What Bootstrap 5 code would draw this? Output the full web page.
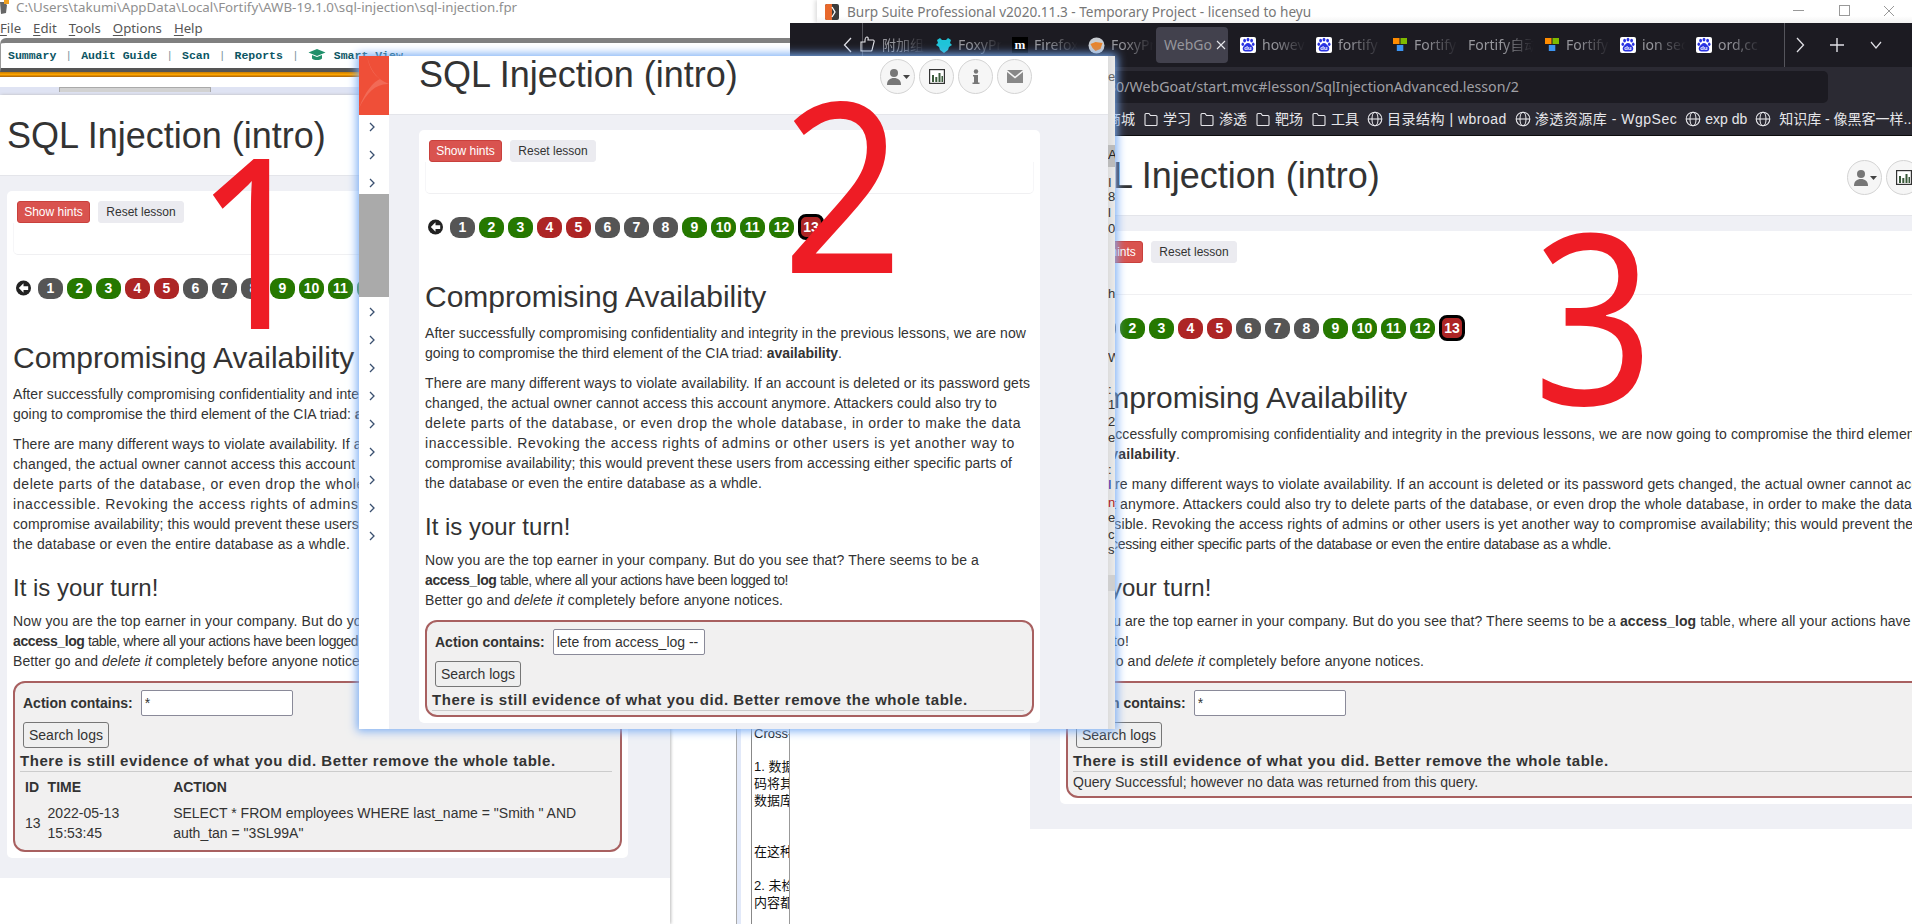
<!DOCTYPE html>
<html lang="en">
<head>
    <meta charset="UTF-8">
    <meta name="viewport" content="width=device-width, initial-scale=1.0">
    <title>SQL Injection (intro)</title>
    <link href="https://cdn.jsdelivr.net/npm/bootstrap@5.3.0/dist/css/bootstrap.min.css" rel="stylesheet">
    <style>
        html, body { height: 100%; }
        body { background: #fff; overflow: hidden; font: 14px/20px "Liberation Sans", Arial, sans-serif; color: #333; }
        .desk { position: relative; width: 1912px; height: 924px; overflow: hidden; }
        .win { position: absolute; overflow: hidden; background: #fff; }

        /* fortify window */
        .fortify { left: 0; top: 0; width: 790px; height: 96px; }
        .fy-title { height: 18px; padding-left: 16px; font: 13.3px/15px "Noto Sans", sans-serif; color: #8f8f8f; white-space: nowrap; position: relative; }
        .fy-icon { position: absolute; left: 0; top: 0; }
        .fy-menu { height: 20px; font: 13.2px/20px "Noto Sans", sans-serif; color: #555; gap: 12px; }
        .fy-menu u { text-underline-offset: 2px; }
        .fy-bar { height: 34px; background: #fff; border-top: 5px solid #808080; border-bottom: 4px solid #555; border-left: 1px solid #999; border-radius: 6px 0 0 0; padding-left: 7px; font: bold 11.5px/25px "Liberation Mono", monospace; color: #0b5563; white-space: nowrap; }
        .fy-bar i { font-style: normal; color: #7d95a0; font-weight: normal; margin: 0 9px; }
        .fy-orange { height: 5px; background: linear-gradient(#c77a00, #fca400 50%, #a8620a); }
        .fy-tabs { height: 15px; background: #dfe3f3; padding-left: 59px; }
        .fy-tab { width: 152px; height: 5px; margin-top: 10px; background: #d2d2d2; border: 1px solid #aaa; border-bottom: 0; }
        .fy-black { height: 3px; background: #111; }

        /* webgoat lesson */
        .lesson-head { background: #fff; border-bottom: 1px solid #e4e5ea; display: flex; align-items: flex-end; justify-content: space-between; white-space: nowrap; }
        .lesson-title { font: 500 36px/40px "Liberation Sans", sans-serif; margin: 0 0 19px; color: #333; }
        .lesson-tools { margin-bottom: 20px; gap: 4px; flex: none; }
        .tool-btn { width: 35px; height: 35px; border-radius: 50%; background: #f6f6f6; border: 1px solid #d4d4d4; padding: 0; display: flex; align-items: center; justify-content: center; }
        .lesson-body { background: #eff0f5; padding: 15px 0 20px; }
        .lesson-card { background: #fff; border-radius: 5px; padding: 10px 6px 6px; width: 621px; }
        .lesson-card p { margin: 0 0 10px; }
        .fit-line { display: block; width: max-content; white-space: nowrap; }
        .act-row { gap: 8px; padding-left: 4px; }
        .act-btn { font-size: 12px; line-height: 16px; padding: 2px 0; border-radius: 3px; }
        .act-hint { background: #d9534f; border: 1px solid #c9403c; color: #fff; width: 73px; }
        .act-reset { background: #ebebf0; border: 1px solid #ebebf0; color: #333; width: 86px; }
        .hint-panel { height: 32px; border-bottom: 1px solid #f0f0f2; border-left: 1px solid #f6f6f8; border-right: 1px solid #f6f6f8; border-radius: 0 0 5px 5px; }
        .pager-row { margin: 23px 0 0 3px; gap: 4px; align-items: center; height: 20px; }
        .pg-back { width: 15px; height: 16px; margin-right: 3px; flex: none; }
        .pg-step { width: 25px; height: 21px; border-radius: 9px; color: #fff; font-weight: bold; font-size: 14px; line-height: 21px; text-align: center; flex: none; }
        .pg-gray { background: #555; }
        .pg-green { background: #267800; }
        .pg-red { background: #ad2525; }
        .pg-now { outline: 3px solid #000; outline-offset: -2px; height: 24px; line-height: 24px; width: 24px; border-radius: 7px; margin-left: 1px; }
        .lesson-card h2 { font: 500 30px/33px "Liberation Sans", sans-serif; margin: 43px 0 10px; color: #333; }
        .lesson-card h3 { font: 500 24px/26px "Liberation Sans", sans-serif; margin: 21px 0 10px; color: #333; }
        .log-box { border: 2px solid #a86060; border-radius: 12px; background: #f1f0f0; padding: 7px 5px 4px; margin-top: 10px; }
        .log-form { padding-left: 3px; }
        .log-label { font-weight: bold; }
        .log-input { width: 152px; height: 26px; border: 1px solid #8a8a99; border-radius: 2px; padding: 0 3px; font: 14px "Liberation Sans", sans-serif; color: #333; background: #fff; margin-left: 8px; }
        .log-search { display: block; height: 26px; margin-top: 6px; padding: 0 5px; font-size: 14px; line-height: 24px; background: #efefef; border: 1px solid #767676; border-radius: 3px; color: #333; }
        .log-feedback { font-weight: bold; font-size: 15px; letter-spacing: .56px; line-height: 20px; margin-top: 3px; white-space: nowrap; }
        .log-rule { height: 1px; background: #ccc; margin-right: 3px; }
        .log-table { --bs-table-bg: transparent; --bs-table-color: #333; margin: 0; border-collapse: separate; width: auto; }
        .log-table th, .log-table td { border: 0; padding: 3px 2px; vertical-align: middle; }
        .log-table th:first-child, .log-table td:first-child { padding-left: 3px; padding-right: 3px; }
        .log-table td { padding-top: 1px; padding-bottom: 1px; }
        .log-table td.cell-time { width: 125px; }
        .log-table td.cell-act { width: 450px; }

        /* second window */
        .win-two { left: 359px; top: 56px; width: 756px; height: 673px; display: flex; box-shadow: 0 0 9px 2px #79adf5; z-index: 5; }
        .win-two .lesson-card { margin-left: 30px; }
        .win-two .lesson-head { height: 59px; padding: 0 76px 0 30px; }
        .win-two .lesson-main { width: 719px; flex: none; }
        .wg-side { width: 30px; flex: none; background: #fff; }
        .wg-logo { display: block; }
        .wg-menu { margin-top: -2px; padding-right: 4px; }
        .wg-chev { height: 28px; display: flex; align-items: center; justify-content: center; }
        .wg-thumb { height: 103px; background: #aaa; margin: -3px -4px 1px 0; }
        .edge-strip { width: 7px; flex: none; background: linear-gradient(90deg, #dcdcdc, #eaeaea); position: relative; font: 13px/16px "Liberation Sans", sans-serif; color: #333; overflow: hidden; }
        .edge-glyph { position: absolute; left: 0; }
        .edge-thumb { position: absolute; left: 0; width: 7px; background: #bbb; }

        /* chinese notes behind */
        .notes { left: 736px; top: 600px; width: 54px; height: 324px; background: #fff; border-left: 1px solid #aaa; border-right: 1px solid #999; z-index: 1; font: 13px/17px "Liberation Sans", "Noto Sans CJK SC", sans-serif; color: #111; white-space: nowrap; }
        .notes-band { position: absolute; left: 0; top: 0; bottom: 0; width: 4px; background: #e2e9f9; }
        .notes-rule { position: absolute; left: 14px; top: 0; bottom: 0; width: 1px; background: #888; }
        .note-line { position: absolute; left: 17px; }

        /* burp + firefox */
        .burp-bar { left: 817px; top: 0; width: 1095px; height: 23px; z-index: 2; box-shadow: -2px 0 4px #ddd; padding-left: 8px; background: linear-gradient(#fff 70%, #f2f2f2); }
        .burp-name { font: 13.6px/22px "Noto Sans", sans-serif; color: #777; white-space: nowrap; }
        .ctl { position: absolute; top: 5px; }
        .fx { left: 790px; top: 23px; width: 1122px; height: 113px; background: #2b2a33; z-index: 3; }
        .fx-tabs { height: 44px; background: #1c1b22; padding-left: 66px; position: relative; }
        .fx-tab { width: 76px; height: 36px; margin-top: 4px; flex: none; display: flex; align-items: center; gap: 6px; padding-left: 4px; overflow: hidden; white-space: nowrap; font: 14px/36px "Noto Sans", "Noto Sans CJK SC", sans-serif; color: #96969c; border-radius: 4px; -webkit-mask-image: linear-gradient(90deg, #000 50%, transparent 92%); mask-image: linear-gradient(90deg, #000 50%, transparent 92%); }
        .fx-tab svg { flex: none; }
        .fx-active { background: #42414d; -webkit-mask-image: none; mask-image: none; padding-left: 8px; width: 72px; margin: 4px 8px 0 -4px; gap: 4px; }
        .fx-rule { position: absolute; top: 0; width: 1px; height: 44px; background: #55555c; }
        .fx-glyph { position: absolute; color: #e0e0e6; }
        .fx-url { height: 32px; margin: 4px 84px 0 250px; background: #1c1b22; border-radius: 5px; padding-left: 68px; font: 14.2px/32px "Noto Sans", sans-serif; color: #a0a0a6; white-space: nowrap; overflow: hidden; }
        .fx-marks { height: 33px; padding-left: 317px; gap: 8px; font: 14px/33px "Liberation Sans", "Noto Sans CJK SC", sans-serif; color: #e6e6ea; white-space: nowrap; border-bottom: 1px solid #0c0c0d; align-items: center; }
        .fx-mark { gap: 4px; align-items: center; }
        .fx-wide { letter-spacing: .5px; }
        .fx-page { left: 790px; top: 136px; width: 240px; height: 788px; background: #fff; z-index: 1; }

        /* third window */
        .win-three { left: 1030px; top: 136px; width: 882px; height: 788px; z-index: 1; }
        .win-three .lesson-head { height: 80px; padding-left: 31px; width: 1100px; }
        .win-three .lesson-tools { margin-right: 131px; }
        .win-three .lesson-body { width: 1080px; padding-bottom: 25px; }
        .win-three .lesson-card { width: 1020px; margin-left: 30px; }

        /* first window */
        .win-one { left: 0; top: 95px; width: 670px; height: 829px; box-shadow: 1px 0 3px #bbb; z-index: 0; }
        .win-one .lesson-head { height: 81px; padding-left: 7px; }
        .win-one .lesson-tools { display: none !important; }
        .win-one .lesson-card { margin-left: 7px; }

        /* hand written numbers */
        .big-num { position: absolute; z-index: 9; font: 238px/238px "Noto Sans", sans-serif; color: #ee1c25; transform: scaleX(.89); transform-origin: left top; }
    </style>
</head>
<body>
<svg width="0" height="0" class="position-absolute">
    <symbol id="baidu" viewBox="0 0 16 16">
        <rect width="16" height="16" rx="2" fill="#fff"/>
        <g fill="#2932e1"><ellipse cx="4.6" cy="3.6" rx="1.4" ry="1.9"/><ellipse cx="8" cy="2.6" rx="1.4" ry="1.9"/><ellipse cx="11.6" cy="3.6" rx="1.4" ry="1.9"/><ellipse cx="2.8" cy="7.2" rx="1.3" ry="1.7"/><ellipse cx="13.2" cy="7.2" rx="1.3" ry="1.7"/><path d="M8 6c-2 0-3 2-4.500 3.500C2 11 2.600 14.500 5.500 14.500h5c2.900 0 3.500-3.500 2-5C11 8 10 6 8 6z"/></g>
        <text x="8" y="13" font-size="6" font-weight="bold" text-anchor="middle" fill="#fff" font-family="Liberation Sans">du</text>
    </symbol>
    <symbol id="ms4" viewBox="0 0 16 16">
        <rect x="1" y="1" width="6.500" height="6" fill="#ff8c00"/><rect x="8.500" y="1" width="6.500" height="6" fill="#7fba00"/><rect x="4.800" y="8" width="6.500" height="6" fill="#3b93f0"/>
    </symbol>
    <symbol id="globe" viewBox="0 0 16 16">
        <g fill="none" stroke="#e6e6ea" stroke-width="1.100"><circle cx="8" cy="8" r="6.800"/><ellipse cx="8" cy="8" rx="3" ry="6.800"/><path d="M1.200 8h13.600"/></g>
    </symbol>
    <symbol id="folder" viewBox="0 0 16 16">
        <path d="M2 13.500V3.500c0-.6.400-1 1-1h3l1.500 2h5.500c.6 0 1 .4 1 1v8c0 .6-.4 1-1 1H3c-.6 0-1-.4-1-1z" fill="none" stroke="#e6e6ea" stroke-width="1.100"/>
    </symbol>
    <symbol id="chev" viewBox="0 0 8 10">
        <path d="M2 1l4 4-4 4" fill="none" stroke="#3a5070" stroke-width="1.300"/>
    </symbol>
</svg>

<div class="desk">
    <!-- fortify behind everything -->
    <div class="win fortify">
        <div class="fy-title"><svg class="fy-icon" width="11" height="14" viewBox="0 0 11 14"><path d="M0 2l4 0 3 3-1 8-5 1z" fill="#666"/><rect x="4" y="0" width="5" height="4" fill="#f0a020"/></svg>C:\Users\takumi\AppData\Local\Fortify\AWB-19.1.0\sql-injection\sql-injection.fpr</div>
        <div class="fy-menu d-flex"><span><u>F</u>ile</span><span><u>E</u>dit</span><span><u>T</u>ools</span><span><u>O</u>ptions</span><span><u>H</u>elp</span></div>
        <div class="fy-bar">Summary<i>|</i>Audit Guide<i>|</i>Scan<i>|</i>Reports<i>|</i><svg width="18" height="14" viewBox="0 0 18 14" class="me-2 align-text-bottom"><path d="M9 1L0.500 4.500 9 8l8.500-3.500z" fill="#1f8f6a"/><path d="M4 7v3.500c2 2 8 2 10 0V7l-5 2z" fill="#1f8f6a"/></svg>Smart View</div>
        <div class="fy-orange"></div>
        <div class="fy-tabs"><div class="fy-tab"></div></div>
        <div class="fy-black"></div>
    </div>

    <div class="win win-one" id="winOne"></div>

    <div class="win notes">
        <div class="notes-band"></div><div class="notes-rule"></div>
        <div class="note-line" style="top:125px">Cross-Site</div>
        <div class="note-line" style="top:158px">1. 数据进入</div>
        <div class="note-line" style="top:175px">码将其写入</div>
        <div class="note-line" style="top:192px">数据库或其</div>
        <div class="note-line" style="top:243px">在这种情况</div>
        <div class="note-line" style="top:277px">2. 未检验包</div>
        <div class="note-line" style="top:294px">内容都可以</div>
    </div>

    <!-- burp title + browser chrome -->
    <div class="win burp-bar">
        <div class="d-flex align-items-center gap-1 h-100">
            <svg width="14" height="16" viewBox="0 0 14 16"><rect width="14" height="16" rx="2" fill="#3c3c3c"/><path d="M0 2a2 2 0 012-2h5v16H2a2 2 0 01-2-2z" fill="#e8692c"/><path d="M7 3l3 5-3 5" fill="none" stroke="#fff" stroke-width="1.300"/></svg>
            <span class="burp-name ms-1">Burp Suite Professional v2020.11.3 - Temporary Project - licensed to heyu</span>
        </div>
        <svg class="ctl" style="left:976px" width="11" height="11"><path d="M0 5.500h11" stroke="#999"/></svg>
        <svg class="ctl" style="left:1022px" width="11" height="11"><rect x=".5" y=".5" width="10" height="10" fill="none" stroke="#999"/></svg>
        <svg class="ctl" style="left:1066px" width="12" height="12"><path d="M1 1l10 10M11 1L1 11" stroke="#999"/></svg>
    </div>

    <div class="win fx">
        <div class="fx-tabs d-flex">
            <svg class="fx-glyph" style="left:53px;top:14px" width="9" height="16"><path d="M8 1L1.500 8 8 15" fill="none" stroke="#e0e0e6" stroke-width="1.300"/></svg>
            <div class="fx-rule" style="left:72px"></div>
            <div class="fx-tab"><svg width="16" height="18" viewBox="0 0 16 18"><path d="M1 6h4V4c0-1.500 1-3 2-3s1.500 1 1 3h5c1 0 1.500 1 1 2l-2 8c0 .6-.6 1-1 1H1z" fill="none" stroke="#e6e6ea" stroke-width="1.100"/></svg>附加组件</div>
            <div class="fx-tab"><svg width="16" height="16" viewBox="0 0 16 16"><path d="M1 3l3-2 2 2h4l2-2 3 2-1 3 2 2-3 2-1 3-4 3-4-3-1-3-3-2 2-2z" fill="#1fc4d8"/></svg>FoxyProxy</div>
            <div class="fx-tab"><svg width="16" height="16" viewBox="0 0 16 16"><rect width="16" height="16" fill="#000"/><text x="8" y="12" font-size="13" font-weight="bold" text-anchor="middle" fill="#fff" font-family="Liberation Serif">m</text></svg>Firefox</div>
            <div class="fx-tab"><svg width="17" height="17" viewBox="0 0 17 17"><circle cx="8.500" cy="8.500" r="8" fill="#c9cdd2"/><path d="M2.500 7l5-2 7 1-2 6-5 2-3-3z" fill="#e8842c"/></svg>FoxyProxy</div>
            <div class="fx-tab fx-active">WebGo<svg width="10" height="10" viewBox="0 0 10 10"><path d="M1 1l8 8M9 1L1 9" stroke="#e6e6ea" stroke-width="1.100"/></svg></div>
            <div class="fx-tab"><svg width="16" height="16"><use href="#baidu"/></svg>however</div>
            <div class="fx-tab"><svg width="16" height="16"><use href="#baidu"/></svg>fortify</div>
            <div class="fx-tab"><svg width="16" height="16"><use href="#ms4"/></svg>Fortify</div>
            <div class="fx-tab">Fortify自动</div>
            <div class="fx-tab"><svg width="16" height="16"><use href="#ms4"/></svg>Fortify</div>
            <div class="fx-tab"><svg width="16" height="16"><use href="#baidu"/></svg>ion sec</div>
            <div class="fx-tab"><svg width="16" height="16"><use href="#baidu"/></svg>ord,cc</div>
            <div class="fx-rule" style="left:994px"></div>
            <svg class="fx-glyph" style="left:1006px;top:14px" width="9" height="16"><path d="M1 1l6.500 7L1 15" fill="none" stroke="#e0e0e6" stroke-width="1.300"/></svg>
            <svg class="fx-glyph" style="left:1040px;top:15px" width="14" height="14"><path d="M7 0v14M0 7h14" stroke="#e0e0e6" stroke-width="1.400"/></svg>
            <svg class="fx-glyph" style="left:1080px;top:18px" width="12" height="8"><path d="M1 1l5 6 5-6" fill="none" stroke="#e0e0e6" stroke-width="1.200"/></svg>
        </div>
        <div class="fx-url">80/WebGoat/start.mvc#lesson/SqlInjectionAdvanced.lesson/2</div>
        <div class="fx-marks d-flex">
            <span class="d-flex fx-mark">商城</span>
            <span class="d-flex fx-mark"><svg width="16" height="16"><use href="#folder"/></svg>学习</span>
            <span class="d-flex fx-mark"><svg width="16" height="16"><use href="#folder"/></svg>渗透</span>
            <span class="d-flex fx-mark"><svg width="16" height="16"><use href="#folder"/></svg>靶场</span>
            <span class="d-flex fx-mark"><svg width="16" height="16"><use href="#folder"/></svg>工具</span>
            <span class="d-flex fx-mark fx-wide"><svg width="16" height="16"><use href="#globe"/></svg>目录结构 | wbroad</span>
            <span class="d-flex fx-mark fx-wide"><svg width="16" height="16"><use href="#globe"/></svg>渗透资源库 - WgpSec</span>
            <span class="d-flex fx-mark"><svg width="16" height="16"><use href="#globe"/></svg>exp db</span>
            <span class="d-flex fx-mark"><svg width="16" height="16"><use href="#globe"/></svg>&nbsp;知识库 - 像黑客一样...</span>
        </div>
    </div>
    <div class="win fx-page"></div>

    <div class="win win-three" id="winThree"></div>

    <div class="win win-two">
        <div class="wg-side">
            <svg class="wg-logo" width="30" height="59" viewBox="0 0 30 59"><rect width="30" height="59" fill="#ef4f38"/><path d="M8 0c2 12 7 22 22 28-12-1-22 8-30 24 6-16 14-26 21-29C14 17 10 9 8 0z" fill="#f26a56"/></svg>
            <div class="wg-menu" id="sideMenu"></div>
        </div>
        <div class="lesson-main" id="winTwo"></div>
        <div class="edge-strip" id="edgeStrip"></div>
    </div>

    <span class="big-num" style="left:194px;top:118px">1</span>
    <span class="big-num" style="left:782px;top:62px">2</span>
    <span class="big-num" style="left:1533px;top:194px">3</span>
</div>

<template id="lessonTpl">
    <div class="lesson-head">
        <h1 class="lesson-title">SQL Injection (intro)</h1>
        <div class="lesson-tools d-flex">
            <button type="button" class="tool-btn"><svg width="26" height="18" viewBox="0 0 26 18"><circle cx="9" cy="5" r="4" fill="#777"/><path d="M2 17c0-5 3-7 7-7s7 2 7 7z" fill="#777"/><path d="M18 7h7l-3.500 4z" fill="#444"/></svg></button>
            <button type="button" class="tool-btn"><svg width="16" height="15" viewBox="0 0 16 15"><rect x=".6" y=".6" width="14.800" height="13.800" fill="#fff" stroke="#333" stroke-width="1.200"/><path d="M3 6h2v7H3zM6.300 8h2v5h-2zM9.500 4h2v9h-2zM12.500 7h1.500v6h-1.500z" fill="#3a5a3a"/></svg></button>
            <button type="button" class="tool-btn"><svg width="8" height="16" viewBox="0 0 8 16"><circle cx="4" cy="2.500" r="2.200" fill="#777"/><path d="M1 6h5v7.500h1.500V15H.5v-1.500H2V7.500H1z" fill="#777"/></svg></button>
            <button type="button" class="tool-btn"><svg width="16" height="13" viewBox="0 0 16 13"><path d="M0 0h16L8 6.500z" fill="#888"/><path d="M0 2v11h16V2L8 8.500z" fill="#888"/></svg></button>
        </div>
    </div>
    <div class="lesson-body">
        <div class="lesson-card">
            <div class="act-row d-flex">
                <button type="button" class="btn act-btn act-hint">Show hints</button>
                <button type="button" class="btn act-btn act-reset">Reset lesson</button>
            </div>
            <div class="hint-panel"></div>
            <div class="pager-row d-flex" data-pager></div>
            <h2>Compromising Availability</h2>
            <p data-para="0"></p>
            <p data-para="1"></p>
            <h3>It is your turn!</h3>
            <p class="mb-0" data-para="2"></p>
            <div class="log-box">
                <form class="log-form">
                    <label class="log-label">Action contains:</label><input class="log-input" type="text" data-query>
                    <button type="button" class="log-search">Search logs</button>
                </form>
                <div class="log-feedback">There is still evidence of what you did. Better remove the whole table.</div>
                <div class="log-rule"></div>
                <div data-output></div>
            </div>
        </div>
    </div>
</template>

<script>
    // same lesson page is open in all three windows, only the log box and the wrapping differ
    const steps = ['gray','green','green','red','red','gray','gray','gray','green','green','green','green','red'];
    const rows = `<table class="table log-table"><thead><tr><th>ID</th><th>TIME</th><th>ACTION</th></tr></thead>
        <tbody><tr><td>13</td><td class="cell-time">2022-05-13 15:53:45</td><td class="cell-act">SELECT * FROM employees WHERE last_name = "Smith " AND auth_tan = "3SL99A"</td></tr></tbody></table>`;

    // [line, width the line has in the picture]; 0 = keep it close to natural width
    const narrowCopy = [
        [['After successfully compromising confidentiality and integrity in the previous lessons, we are now', 601],
         ['going to compromise the third element of the CIA triad: <b>availability</b>.', 417]],
        [['There are many different ways to violate availability. If an account is deleted or its password gets', 605],
         ['changed, the actual owner cannot access this account anymore. Attackers could also try to', 572],
         ['delete parts of the database, or even drop the whole database, in order to make the data', 596],
         ['inaccessible. Revoking the access rights of admins or other users is yet another way to', 590],
         ['compromise availability; this would prevent these users from accessing either specific parts of', 587],
         ['the database or even the entire database as a whdle.', 337]],
        [['Now you are the top earner in your company. But do you see that? There seems to be a', 554],
         ['<b>access_log</b> table, where all your actions have been logged to!', 363],
         ['Better go and <i>delete it</i> completely before anyone notices.', 358]]
    ];
    const wideCopy = [
        [['After successfully compromising confidentiality and integrity in the previous lessons, we are now going to compromise the third element of the CIA', 0],
         ['triad: <b>availability</b>.', 114]],
        [['There are many different ways to violate availability. If an account is deleted or its password gets changed, the actual owner cannot access this', 0],
         ['account anymore. Attackers could also try to delete parts of the database, or even drop the whole database, in order to make the data', 846],
         ['inaccessible. Revoking the access rights of admins or other users is yet another way to compromise availability; this would prevent these users', 0],
         ['from accessing either specific parts of the database or even the entire database as a whdle.', 545]],
        [['Now you are the top earner in your company. But do you see that? There seems to be a <b>access_log</b> table, where all your actions have been', 880],
         ['logged to!', 63],
         ['Better go and <i>delete it</i> completely before anyone notices.', 358]]
    ];

    function fillLesson(id, query, output, copy) {
        const win = document.getElementById(id);
        win.appendChild(document.getElementById('lessonTpl').content.cloneNode(true));
        const pager = win.querySelector('[data-pager]');
        pager.innerHTML = '<svg class="pg-back" viewBox="0 0 16 16"><circle cx="8" cy="8" r="8" fill="#222"/><path d="M3 8l5-5v3h5v4H8v3z" fill="#fff"/></svg>';
        steps.forEach((c, i) => {
            const now = i === steps.length - 1 ? ' pg-now' : '';
            pager.innerHTML += `<div class="pg-step pg-${c}${now}">${i + 1}</div>`;
        });
        win.querySelectorAll('[data-para]').forEach(p => {
            copy[p.dataset.para].forEach(([html, width]) => {
                const line = document.createElement('span');
                line.className = 'fit-line';
                line.innerHTML = html;
                p.appendChild(line);
                const extra = width ? (width - line.getBoundingClientRect().width) / line.textContent.length : 0.12;
                line.style.letterSpacing = extra.toFixed(3) + 'px';
            });
        });
        win.querySelector('[data-query]').value = query;
        win.querySelector('[data-output]').innerHTML = output;
    }
    fillLesson('winOne', '*', rows, narrowCopy);
    fillLesson('winTwo', 'lete from access_log --', '', narrowCopy);
    fillLesson('winThree', '*', '<div>Query Successful; however no data was returned from this query.</div>', wideCopy);

    // window 2 sidebar, chevrons around the scroll block
    const side = document.getElementById('sideMenu');
    const chev = '<div class="wg-chev"><svg width="8" height="10"><use href="#chev"/></svg></div>';
    side.innerHTML = chev.repeat(3) + '<div class="wg-thumb"></div>' + chev.repeat(9);

    // bits of window 3's sidebar that show through the edge of window 2
    const strip = document.getElementById('edgeStrip');
    [['e',13,'#666'],['A',91,'#222'],['I',119,'#333'],['8',133,'#333'],['l',149,'#333'],['0',165,'#333'],['h',230,'#333'],['W',294,'#333'],[':',326,'#333'],['1',341,'#333'],['2',358,'#333'],['e',374,'#333'],[':',406,'#333'],['I',421,'#22a'],['n',439,'#a22'],['e',454,'#333'],['c',471,'#333'],['s',486,'#333']].forEach(([t, y, c]) => {
        strip.insertAdjacentHTML('beforeend', `<span class="edge-glyph" style="top:${y}px;color:${c}">${t}</span>`);
    });
    strip.insertAdjacentHTML('afterbegin', '<div class="edge-thumb" style="top:89px;height:22px"></div><div class="edge-thumb" style="top:519px;height:16px;background:#cfcfcf"></div>');
</script>
<script src="https://cdn.jsdelivr.net/npm/bootstrap@5.3.0/dist/js/bootstrap.bundle.min.js"></script>
</body>
</html>
